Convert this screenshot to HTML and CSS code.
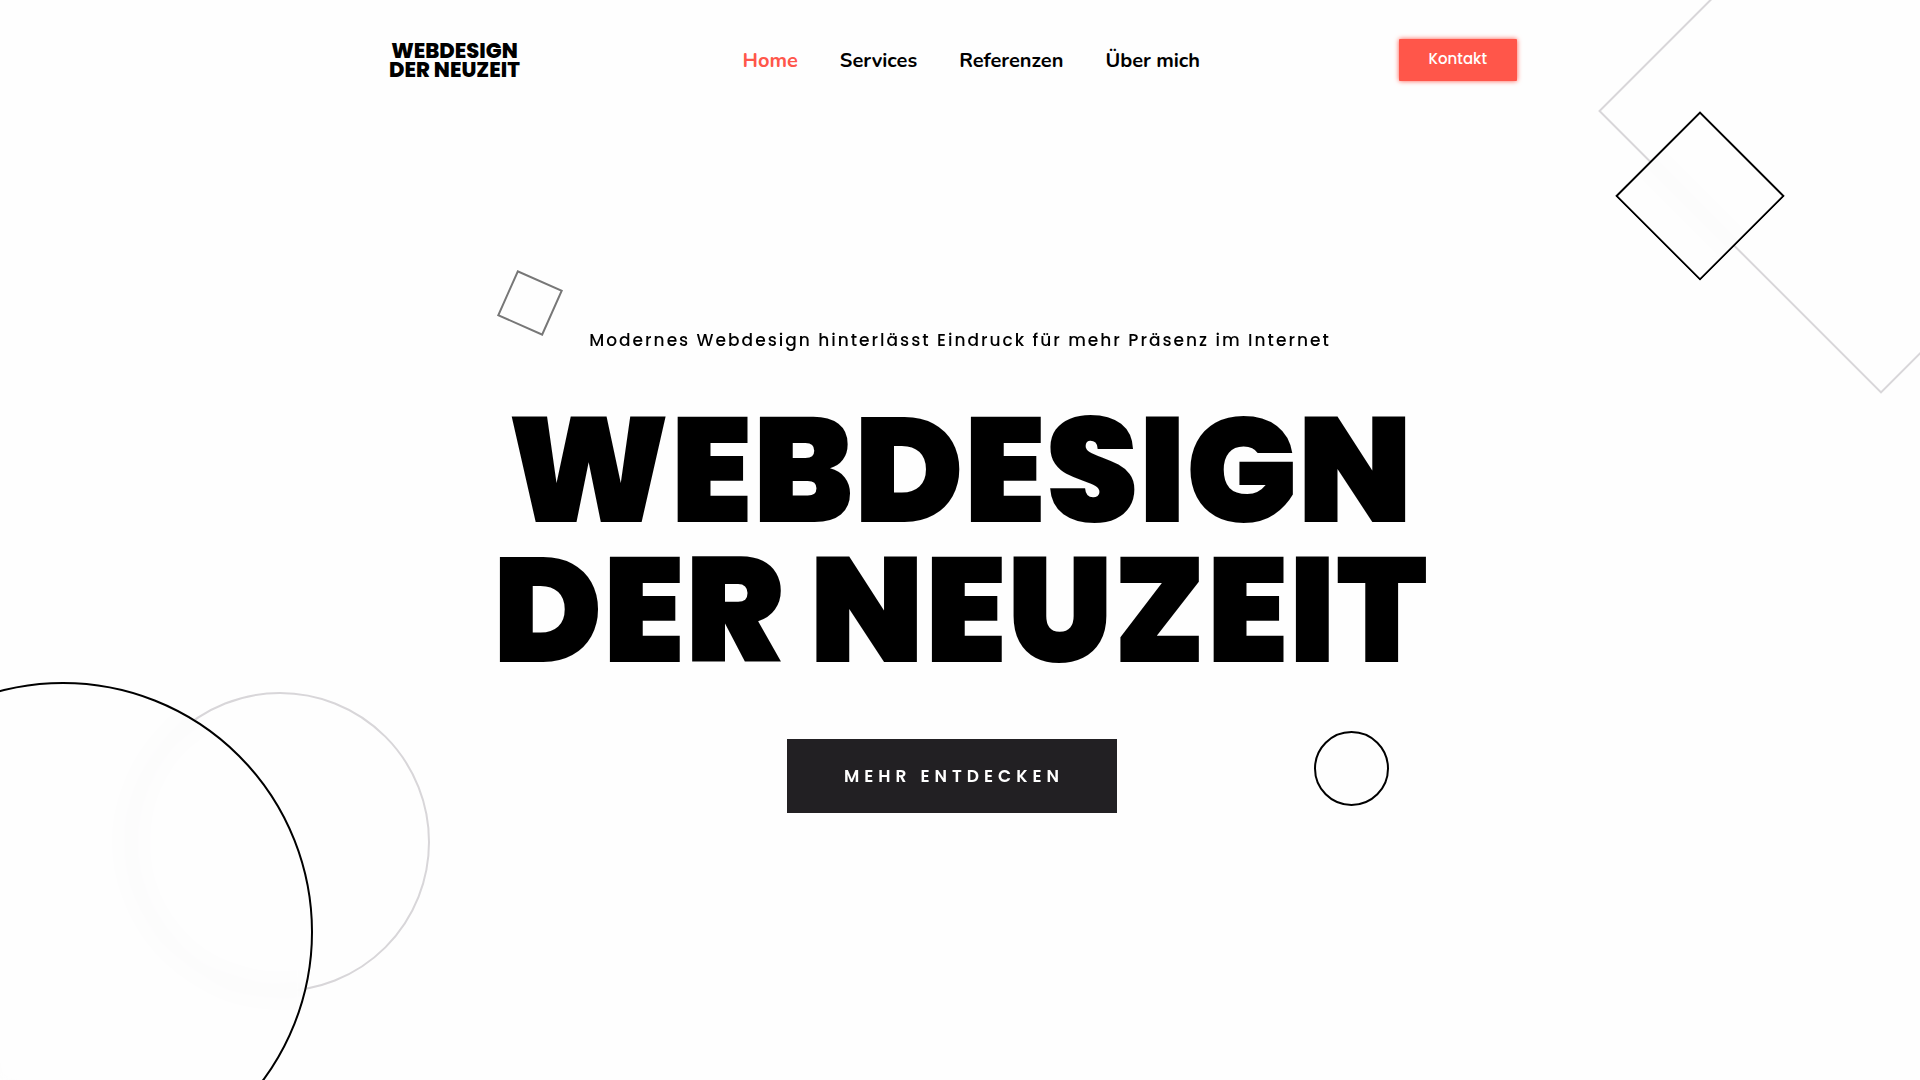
FILE: index.html
```html
<!DOCTYPE html>
<html lang="de">
<head>
    <meta charset="UTF-8">
    <meta name="viewport" content="width=device-width, initial-scale=1.0">
    <title>Webdesign der Neuzeit</title>
    <link rel="stylesheet" href="styles.css">
</head>
<body>
    <header class="header">
        <a href="#" class="logo">WEBDESIGN<br>DER NEUZEIT</a>
        <nav class="nav">
            <a href="#" class="active">Home</a>
            <a href="#services">Services</a>
            <a href="#referenzen">Referenzen</a>
            <a href="#ueber-mich">Über mich</a>
        </nav>
        <a href="#kontakt" class="contact-button">Kontakt</a>
    </header>

    <main class="hero">
        <p class="tagline">Modernes Webdesign hinterlässt Eindruck für mehr Präsenz im Internet</p>
        <h1>WEBDESIGN<br>DER NEUZEIT</h1>
        <div class="hero-actions">
            <button type="button" class="more-button">MEHR ENTDECKEN</button>
        </div>
    </main>

    <!-- Decorative shapes -->
    <div class="shapes" aria-hidden="true">
        <div class="shape square-large"></div>
        <div class="shape square-medium"></div>
        <div class="shape square-small"></div>
        <div class="shape circle circle-light"></div>
        <div class="shape circle circle-large"></div>
        <div class="shape circle circle-small"></div>
    </div>
</body>
</html>
```
FILE: styles.css
```css
* {
    box-sizing: border-box;
}
body {
    position: relative;
    margin: 0;
    min-height: 100vh;
    overflow: hidden;
    background-color: #fefefe;
    color: #000;
    font-family: Poppins, Inter, sans-serif;
}
a {
    color: inherit;
    text-decoration: none;
}

/* Header */
.header {
    position: relative;
    z-index: 1;
    display: flex;
    align-items: center;
    justify-content: space-between;
    max-width: 1142px;
    height: 120px;
    margin: 0 auto;
    padding-right: 14px;
}
.logo {
    font-size: 21px;
    font-weight: 800;
    line-height: 19px;
    text-align: center;
}
.nav {
    display: flex;
    gap: 42px;
    padding-left: 24px;
    font-family: Nunito, Lato, sans-serif;
    font-size: 20px;
    font-weight: 700;
}
.nav .active {
    color: #ff564a;
}
.contact-button {
    padding: 9px 30px 11px;
    border-radius: 1px;
    background-color: #ff564a;
    box-shadow: 0 0 5px #ff564a;
    color: #fff;
    font-size: 15px;
    font-weight: 500;
    line-height: 22px;
}

/* Hero */
.hero {
    position: relative;
    z-index: 1;
    display: flex;
    flex-direction: column;
    align-items: center;
    padding: 200px 20px 120px;
    text-align: center;
}
.tagline {
    margin: 0;
    font-size: 17px;
    font-weight: 500;
    line-height: 40px;
    letter-spacing: 2px;
}
h1 {
    margin: 41px 0 58px;
    font-size: 148px;
    font-weight: 900;
    line-height: 140px;
}
.hero-actions {
    padding-right: 16px;
}
.more-button {
    padding: 24px 53px 24px 57px;
    border: none;
    background-color: #222023;
    color: #fff;
    font-family: inherit;
    font-size: 17px;
    font-weight: 600;
    line-height: 26px;
    letter-spacing: 5px;
    cursor: pointer;
}

/* Shapes */
.shapes {
    position: absolute;
    inset: 0;
    overflow: hidden;
}
.shape {
    position: absolute;
    border: 2px solid #000;
}
.circle {
    border-radius: 50%;
}
.square-large {
    top: -89px;
    right: -161px;
    width: 400px;
    height: 400px;
    border-color: #d8d6d9;
    transform: rotate(45deg);
}
.square-medium {
    top: 136px;
    right: 160px;
    width: 120px;
    height: 120px;
    background-color: rgba(254, 254, 254, 0.5);
    backdrop-filter: blur(10px);
    transform: rotate(45deg);
}
.square-small {
    top: 278px;
    left: calc(50% - 455px);
    width: 50px;
    height: 50px;
    border-color: #777;
    transform: rotate(24deg);
}
.circle-light {
    bottom: 88px;
    left: 130px;
    width: 300px;
    height: 300px;
    border-color: #d8d6d9;
}
.circle-large {
    bottom: -102px;
    left: -187px;
    width: 500px;
    height: 500px;
    background-color: rgba(254, 254, 254, 0.5);
    backdrop-filter: blur(10px);
}
.circle-small {
    top: 731px;
    left: calc(50% + 354px);
    width: 75px;
    height: 75px;
}
```
